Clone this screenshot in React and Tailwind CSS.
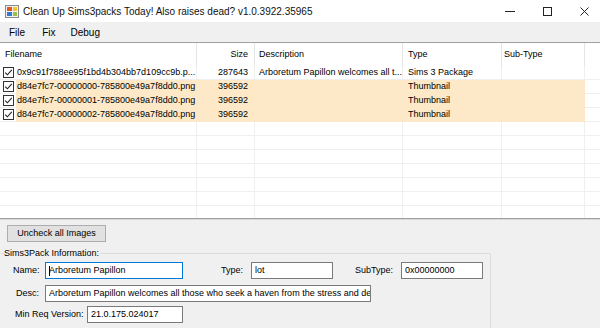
import React from "react";

const FONT = { fontFamily: '"Liberation Sans", Arial, sans-serif' };

const cols = [
  { key: "name", label: "Filename", w: "w-[197px]", head: "pl-[5px]" },
  { key: "size", label: "Size", w: "w-[58px]", head: "justify-end pr-[6px]" },
  { key: "desc", label: "Description", w: "w-[148px]", head: "pl-[4px]" },
  { key: "type", label: "Type", w: "w-[99px]", head: "pl-[5px]" },
  { key: "sub", label: "Sub-Type", w: "w-[83px]", head: "pl-[2px]" },
];

const rows = [
  {
    name: "0x9c91f788ee95f1bd4b304bb7d109cc9b.p...",
    size: "287643",
    desc: "Arboretum Papillon welcomes all t...",
    type: "Sims 3 Package",
    hl: false,
  },
  { name: "d84e7fc7-00000000-785800e49a7f8dd0.png", size: "396592", desc: "", type: "Thumbnail", hl: true },
  { name: "d84e7fc7-00000001-785800e49a7f8dd0.png", size: "396592", desc: "", type: "Thumbnail", hl: true },
  { name: "d84e7fc7-00000002-785800e49a7f8dd0.png", size: "396592", desc: "", type: "Thumbnail", hl: true },
];

function AppIcon() {
  return (
    <svg width="14" height="13" viewBox="0 0 14 13">
      <rect x="0.5" y="0.5" width="13" height="12" fill="#f3f3f3" stroke="#8a8a8a" />
      <rect x="2" y="2" width="5" height="4" fill="#e2571e" />
      <rect x="2" y="7" width="5" height="4" fill="#2e7bd6" />
      <rect x="8" y="2" width="4" height="4" fill="#f5c431" />
      <rect x="8" y="7" width="4" height="4" fill="#9ac04a" />
    </svg>
  );
}

function CheckBox() {
  return (
    <svg width="11" height="11" viewBox="0 0 11 11">
      <rect x="0.5" y="0.5" width="10" height="10" fill="#fff" stroke="#333" />
      <path d="M2.2 5.6 L4.4 7.8 L8.8 2.8" fill="none" stroke="#222" strokeWidth="1.1" />
    </svg>
  );
}

function ListRow({ row }) {
  const hl = row?.hl;
  const cell = hl ? "bg-[#fde9c8] border-transparent" : "border-[#efefef]";
  return (
    <div className="flex h-[14px] shrink-0 items-center">
      <div className="flex h-full w-[16px] items-center justify-center bg-white pl-[1px] border-b border-[#efefef]">
        {row && <CheckBox />}
      </div>
      <div className={`flex h-full w-[181px] items-center whitespace-nowrap overflow-hidden pl-[1px] border-r border-b ${cell}`}>
        {row?.name}
      </div>
      <div className={`flex h-full w-[58px] items-center justify-end pr-[6px] border-r border-b ${cell}`}>
        {row?.size}
      </div>
      <div className={`flex h-full w-[148px] items-center whitespace-nowrap overflow-hidden pl-[4px] border-r border-b ${cell}`}>
        {row?.desc}
      </div>
      <div className={`flex h-full w-[99px] items-center pl-[5px] border-r border-b ${cell}`}>
        {row?.type}
      </div>
      <div className={`flex h-full w-[83px] items-center border-r border-b ${cell}`} />
      <div className="h-full flex-1 border-b border-[#efefef]" />
    </div>
  );
}

function Field({ w, value, focused, caret }) {
  return (
    <div
      className={`flex h-[17px] ${w} items-center overflow-hidden whitespace-nowrap bg-white pl-[3px] border ${
        focused ? "border-[#0078d7]" : "border-[#7a7a7a]"
      }`}
    >
      {caret && <span className="mr-[-1px] inline-block h-[10px] w-[1px] bg-black" />}
      {value}
    </div>
  );
}

export default function App() {
  return (
    <div className="flex h-[328px] w-[600px] flex-col overflow-hidden bg-white text-[9px] text-black" style={FONT}>
      {/* title bar */}
      <div className="flex h-[22px] shrink-0 items-center bg-white">
        <div className="ml-[5px] flex items-center">
          <AppIcon />
        </div>
        <span className="ml-[4px] text-[10px] text-[#111]">Clean Up Sims3packs Today! Also raises dead? v1.0.3922.35965</span>
        <div className="ml-auto flex items-center gap-[28px] pr-[11px]">
          <div className="h-[1px] w-[10px] bg-[#222]" />
          <div className="h-[9px] w-[9px] border border-[#222]" />
          <svg width="9" height="9" viewBox="0 0 9 9">
            <path d="M0.5 0.5 L8.5 8.5 M8.5 0.5 L0.5 8.5" stroke="#222" strokeWidth="1" />
          </svg>
        </div>
      </div>

      {/* menu */}
      <div className="flex h-[20px] shrink-0 items-center bg-[#f0f0f0] pl-[9px] text-[10px]">
        <span>File</span>
        <span className="ml-[17px]">Fix</span>
        <span className="ml-[15px]">Debug</span>
      </div>

      {/* list view */}
      <div className="flex shrink-0 flex-col border-t border-[#a0a0a0]">
        <div className="flex h-[23px] items-center">
          {cols.map((c) => (
            <div key={c.key} className={`flex h-full ${c.w} items-center border-r border-[#e5e5e5] ${c.head}`}>
              {c.label}
            </div>
          ))}
        </div>
        <div className="flex h-[152px] flex-col overflow-hidden">
          {rows.map((r, i) => (
            <ListRow key={i} row={r} />
          ))}
          {Array.from({ length: 7 }).map((_, i) => (
            <ListRow key={"e" + i} />
          ))}
        </div>
        <div className="h-[1px] bg-[#a0a0a0]" />
        <div className="h-[1px] bg-[#d8d8d8]" />
      </div>

      {/* bottom panel */}
      <div className="flex flex-1 flex-col bg-[#f0f0f0]">
        <button className="ml-[7px] mt-[5px] flex h-[17px] w-[99px] items-center justify-center border border-[#adadad] bg-[#e1e1e1]">
          Uncheck all Images
        </button>

        <div className="relative ml-[1px] mt-[11px] flex w-[490px] flex-1 flex-col border-t border-r border-[#dcdcdc]">
          <span className="absolute left-[3px] top-[-7px] bg-[#f0f0f0] pr-[1px] leading-[12px]">Sims3Pack Information:</span>

          <div className="mt-[8px] flex items-center">
            <span className="ml-[12px] w-[32px]">Name:</span>
            <Field w="w-[138px]" value="Arboretum Papillon" focused caret />
            <span className="ml-[38px] w-[30px]">Type:</span>
            <Field w="w-[82px]" value="lot" />
            <span className="ml-[22px] w-[46px]">SubType:</span>
            <Field w="w-[82px]" value="0x00000000" />
          </div>

          <div className="mt-[6px] flex items-center">
            <span className="ml-[15px] w-[29px]">Desc:</span>
            <Field
              w="w-[326px]"
              value="Arboretum Papillon welcomes all those who seek a haven from the stress and demands of modern life."
            />
          </div>

          <div className="mt-[4px] flex items-center">
            <span className="ml-[14px] w-[72px]">Min Req Version:</span>
            <Field w="w-[96px]" value="21.0.175.024017" />
          </div>
        </div>
      </div>
    </div>
  );
}
